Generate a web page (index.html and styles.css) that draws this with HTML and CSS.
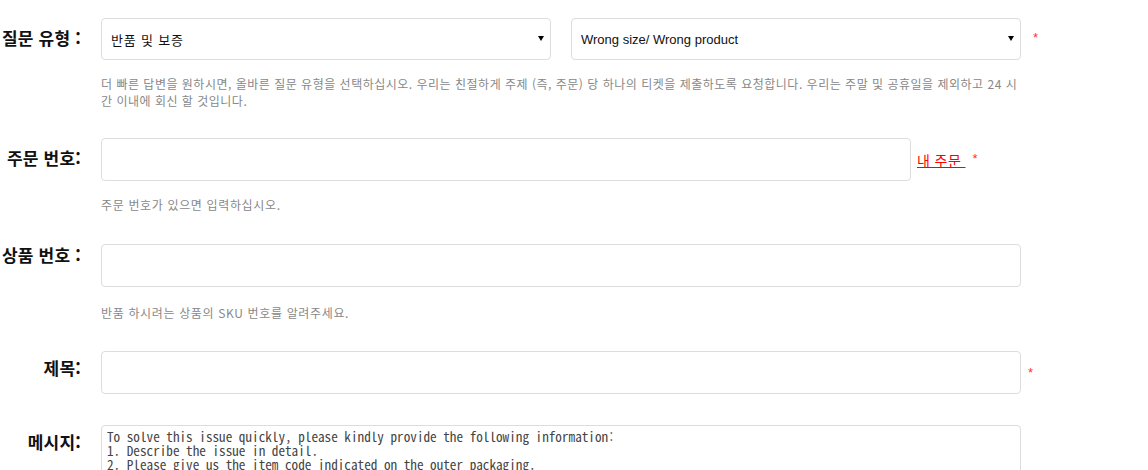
FILE: index.html
```html
<!DOCTYPE html>
<html lang="ko">
<head>
<meta charset="utf-8">
<title>문의</title>
<link rel="stylesheet" href="styles.css">
</head>
<body>
<form class="ticket-form">
  <div class="row row-type">
    <label class="lbl lbl-top20">질문 유형 :</label>
    <div class="field">
      <div class="controls">
        <div class="select-wrap"><select class="select"><option>반품 및 보증</option></select></div>
        <div class="select-wrap"><select class="select select-en"><option>Wrong size/ Wrong product</option></select></div>
        <span class="req req-1">*</span>
      </div>
      <p class="help help-long">더 빠른 답변을 원하시면, 올바른 질문 유형을 선택하십시오. 우리는 친절하게 주제 (즉, 주문) 당 하나의 티켓을 제출하도록 요청합니다. 우리는 주말 및 공휴일을 제외하고 24 시간 이내에 회신 할 것입니다.</p>
    </div>
  </div>

  <div class="row row-order">
    <label class="lbl lbl-top20">주문 번호:</label>
    <div class="field">
      <div class="controls">
        <input class="input input-order" type="text">
        <a class="order-link" href="#">내 주문 </a>
        <span class="req req-2">*</span>
      </div>
      <p class="help">주문 번호가 있으면 입력하십시오.</p>
    </div>
  </div>

  <div class="row row-sku">
    <label class="lbl lbl-top11">상품 번호 :</label>
    <div class="field">
      <div class="controls">
        <input class="input input-full" type="text">
      </div>
      <p class="help help-sku">반품 하시려는 상품의 SKU 번호를 알려주세요.</p>
    </div>
  </div>

  <div class="row row-subject">
    <label class="lbl lbl-top17">제목:</label>
    <div class="field">
      <div class="controls">
        <input class="input input-full" type="text">
        <span class="req req-3">*</span>
      </div>
    </div>
  </div>

  <div class="row">
    <label class="lbl lbl-top17">메시지:</label>
    <div class="field">
      <textarea class="message">To solve this issue quickly, please kindly provide the following information:
1. Describe the issue in detail.
2. Please give us the item code indicated on the outer packaging.</textarea>
    </div>
  </div>
</form>
</body>
</html>
```

FILE: styles.css
```css
html, body {
  margin: 0;
  padding: 0;
  background: #fff;
}
body {
  font-family: "Noto Sans CJK KR", "Liberation Sans", sans-serif;
  color: #111;
  overflow: hidden;
}
.ticket-form {
  padding-top: 18px;
  width: 1148px;
}
.row {
  display: flex;
  align-items: flex-start;
  margin-bottom: 29px;
}
.row-order {
  margin-bottom: 31px;
}
.row-sku {
  margin-bottom: 30px;
}
.row-subject {
  margin-bottom: 31px;
}
.lbl {
  width: 81px;
  flex: none;
  text-align: right;
  font-size: 17px;
  letter-spacing: 0.2px;
  font-weight: bold;
  line-height: 20px;
  color: #111;
  margin-right: 20px;
  white-space: nowrap;
}
.lbl-top20 { padding-top: 10px; }
.lbl-top11 { padding-top: 1px; }
.lbl-top17 { padding-top: 7px; }
.field {
  width: 920px;
  flex: none;
}
.controls {
  display: flex;
  align-items: center;
  position: relative;
}
.select-wrap {
  position: relative;
  width: 450px;
  height: 42px;
}
.select-wrap + .select-wrap {
  margin-left: 20px;
}
.select-wrap::after {
  content: "";
  position: absolute;
  right: 7px;
  top: 18px;
  width: 0;
  height: 0;
  border-left: 3px solid transparent;
  border-right: 3px solid transparent;
  border-top: 5px solid #000;
  pointer-events: none;
}
.select {
  -webkit-appearance: none;
  appearance: none;
  width: 100%;
  height: 42px;
  box-sizing: border-box;
  border: 1px solid #ddd;
  border-radius: 4px;
  background: #fff;
  padding: 0 20px 0 9px;
  font-family: "Noto Sans CJK KR", "Liberation Sans", sans-serif;
  font-size: 13px;
  letter-spacing: 0.8px;
  color: #111;
}
.select-en {
  font-family: "Liberation Sans", Arial, sans-serif;
  letter-spacing: 0;
}
.input {
  height: 43px;
  box-sizing: border-box;
  border: 1px solid #ddd;
  border-radius: 4px;
  background: #fff;
  padding: 0 8px;
  font-size: 13px;
}
.input-order { width: 810px; }
.input-full { width: 920px; }
.order-link {
  margin-left: 6px;
  font-size: 14px;
  letter-spacing: 0.4px;
  color: #f00;
  text-decoration: underline;
  white-space: pre;
}
.req {
  color: #f33;
  font-family: "Liberation Sans", Arial, sans-serif;
  font-size: 13px;
  line-height: 1;
}
.req-1 {
  position: absolute;
  left: 932px;
  top: 13px;
}
.req-2 {
  margin-left: 7px;
  align-self: flex-start;
  margin-top: 14px;
}
.req-3 {
  position: absolute;
  left: 927px;
  top: 15px;
}
.help {
  margin: 15px 0 0;
  font-size: 12px;
  letter-spacing: 0.65px;
  line-height: 17px;
  color: #888;
}
.help-long {
  letter-spacing: 0.5px;
}
.help-sku {
  margin-top: 17px;
}
.message {
  display: block;
  width: 920px;
  height: 120px;
  box-sizing: border-box;
  border: 1px solid #ddd;
  border-radius: 4px;
  padding: 4px 5px;
  margin: 0;
  resize: none;
  font-family: "Noto Sans Mono CJK KR", "Liberation Mono", monospace;
  font-size: 13.2px;
  line-height: 14px;
  color: #444;
  overflow: hidden;
}
```
